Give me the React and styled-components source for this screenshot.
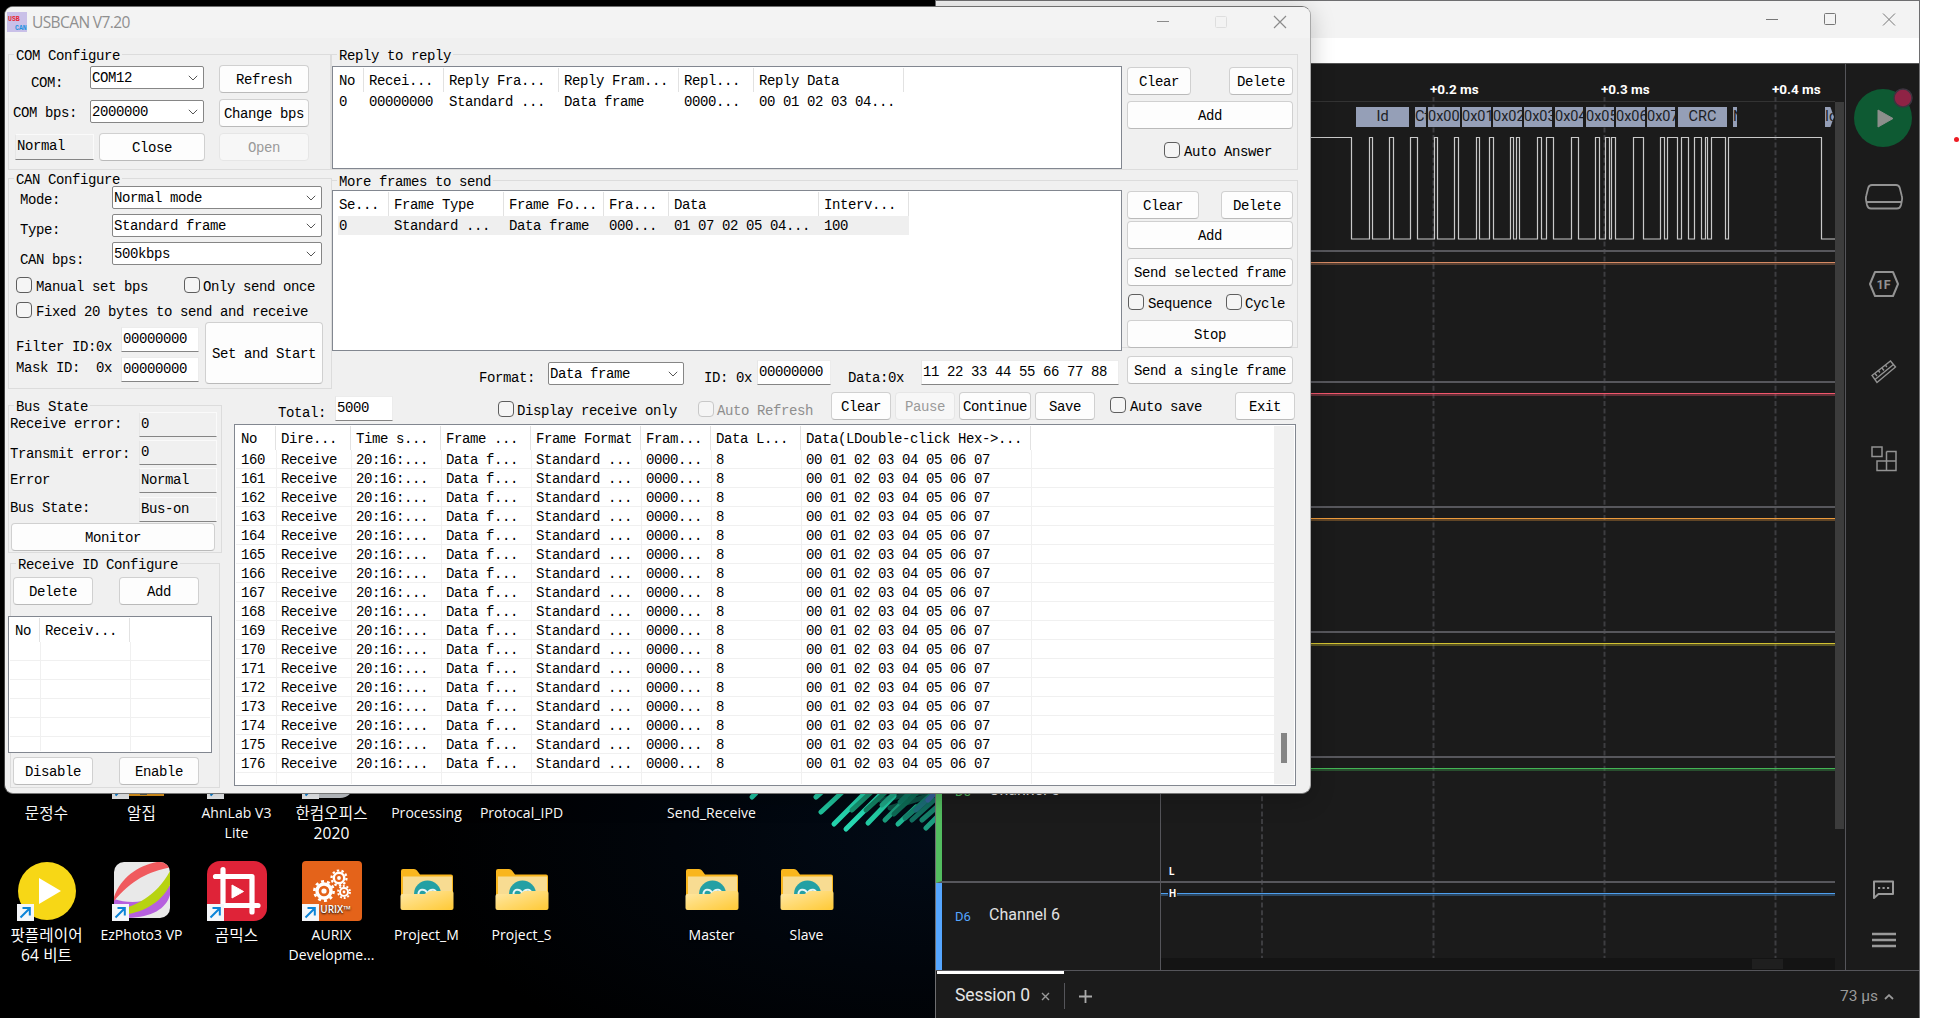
import React from "react";
import styled, { createGlobalStyle, css } from "styled-components";

const Global = createGlobalStyle`
  * { box-sizing: border-box; }
  body { margin: 0; background: #000; overflow: hidden; }
`;

/* ---------- desktop ---------- */

const Desktop = styled.div`
  position: relative;
  width: 1960px;
  height: 1018px;
  overflow: hidden;
  background: radial-gradient(ellipse 520px 260px at 935px 840px, #020b17 0%, #01050b 50%, #000 100%);
`;

const Wallpaper = styled.svg`
  position: absolute;
  left: 740px;
  top: 780px;
`;

const BlankEdge = styled.div`
  position: absolute;
  left: 1920px;
  top: 0;
  width: 40px;
  height: 1018px;
  background: #fff;
  padding: 137px 1px 0 0;
  display: flex;
  justify-content: flex-end;
`;

const RedDot = styled.i`
  width: 5px;
  height: 5px;
  border-radius: 50%;
  background: #ee1c24;
`;

const Shortcuts = styled.div`
  position: absolute;
  left: -1px;
  top: 739px;
  display: grid;
  grid-template-columns: repeat(9, 95px);
  grid-auto-rows: 122px;
`;

const Shortcut = styled.div`
  display: flex;
  flex-direction: column;
  align-items: center;
  font: 14px/20px "Open Sans", "Noto Sans CJK KR", sans-serif;
  letter-spacing: 0.05px;
  color: #fff;
  text-align: center;
  white-space: pre;
  text-shadow: 0 1px 2px #000;
  & > svg { display: block; margin-bottom: 4px; }
`;

const Korean = styled.span`
  font-size: 15.6px;
  letter-spacing: 0.1px;
`;

function Badge() {
  return (
    <g>
      <rect x="0" y="43" width="17" height="17" fill="#f4f6f9" />
      <path d="M3.5 56.5L12 48M5.5 47h7.3v7.5" fill="none" stroke="#0b84d8" strokeWidth="2" />
    </g>
  );
}

function Glyph({ kind }) {
  const folder = (
    <g>
      <path d="M4 10q0-2 2-2h11q2 0 3 1.500l3 4h31q2 0 2 2v32H4z" fill="#f9b61d" />
      <rect x="6" y="15.500" width="49" height="22" fill="#f8dc92" />
      <path d="M17 33a13.500 13.500 0 0 1 27 0z" fill="#24a0a4" />
      <path d="M21.500 33c-.5-5 6.500-6 9-.5 2.500-5.500 9.500-4.500 9 .5" fill="none" stroke="#e6f6f6" strokeWidth="2" />
      <path d="M3.500 35q0-2 2-2h22l5-3h22q2 0 2 2v15q0 2-2 2h-49q-2 0-2-2z" fill="url(#fold)" />
    </g>
  );
  const art = {
    none: null,
    folder,
    zip: <g><rect x="17" y="30" width="35" height="27" fill="#e69a1c" /><rect x="28" y="50" width="7" height="6" fill="#5b5b4b" /><Badge /></g>,
    plain: <Badge />,
    office: <g><rect x="4" y="10" width="48" height="49" rx="14" fill="#c9cdd2" /><Badge /></g>,
    pot: (
      <g>
        <circle cx="30" cy="30" r="29" fill="#f7d716" />
        <path d="M22 17l22 13-22 13z" fill="#fff" />
        <Badge />
      </g>
    ),
    photo: (
      <g>
        <clipPath id="ph"><rect x="2" y="1" width="56" height="56" rx="10" /></clipPath>
        <g clipPath="url(#ph)">
          <rect width="60" height="60" fill="#e9e9e9" />
          <path d="M2 38C20 44 42 42 58 24v10C54 48 40 56 16 57L2 48z" fill="#b660de" />
          <path d="M2 36C10 14 30 2 52 0l8 6C38 10 20 18 2 40z" fill="#f05a5e" />
          <path d="M2 50c20-4 42-14 56-40v14C48 44 28 52 10 54z" fill="#b7d311" />
        </g>
        <Badge />
      </g>
    ),
    gom: (
      <g>
        <rect width="60" height="60" rx="13" fill="#df2338" />
        <path d="M16 8.500v36h35M8.500 15.500H45V51" fill="none" stroke="#fff" strokeWidth="5.200" strokeLinecap="round" strokeLinejoin="round" />
        <path d="M25 24l11.500 6.500L25 37z" fill="#fff" stroke="#fff" strokeLinejoin="round" />
        <Badge />
      </g>
    ),
    aurix: (
      <g>
        <rect width="60" height="60" rx="4" fill="#e4631a" />
        <g fill="none" stroke="#fff">
          <circle cx="22" cy="30" r="7" strokeWidth="3.400" />
          <circle cx="22" cy="30" r="9.600" strokeWidth="2.600" strokeDasharray="3 3" />
          <circle cx="37" cy="17" r="5.200" strokeWidth="2.400" />
          <circle cx="37" cy="17" r="7.500" strokeWidth="2.200" strokeDasharray="2.400 2.300" />
          <circle cx="42" cy="31" r="4" strokeWidth="2" />
          <circle cx="42" cy="31" r="5.900" strokeWidth="2" strokeDasharray="1.900 1.800" />
        </g>
        <circle cx="22" cy="30" r="2.600" fill="#fff" />
        <circle cx="37" cy="17" r="1.900" fill="#fff" />
        <circle cx="42" cy="31" r="1.400" fill="#fff" />
        <text x="49" y="52" textAnchor="end" fontFamily="Open Sans" fontWeight="600" fontSize="10" fill="#fff" letterSpacing="0">URIX™</text>
        <Badge />
      </g>
    ),
  };
  return (
    <svg width="60" height="60" viewBox="0 0 60 60">
      <defs>
        <linearGradient id="fold" x1="0" y1="0" x2="1" y2="1">
          <stop offset="0" stopColor="#ffe9a8" />
          <stop offset="1" stopColor="#ffc934" />
        </linearGradient>
      </defs>
      {art[kind]}
    </svg>
  );
}

const desktopItems = [
  ["none", "문정수", true], ["zip", "알집", true], ["plain", "AhnLab V3\nLite"], ["office", "한컴오피스\n2020", true],
  ["none", "Processing"], ["none", "Protocal_IPD"], null, ["none", "Send_Receive"], null,
  ["pot", "팟플레이어\n64 비트", true], ["photo", "EzPhoto3 VP"], ["gom", "곰믹스", true], ["aurix", "AURIX\nDevelopme..."],
  ["folder", "Project_M"], ["folder", "Project_S"], null, ["folder", "Master"], ["folder", "Slave"],
];

const rays = [
  [12, 17, 16, 13, "#1fc9a6"], [140, 20, 196, 10, "#0b4a40"], [150, 28, 194, 14, "#0c5044"],
  [76, 17, 92, 3, "#22c7a3"], [81, 32, 112, 3, "#1fc29b"], [94, 44, 128, 10, "#24d3ad"],
  [106, 49, 142, 13, "#27d8b2"], [128, 43, 154, 16, "#22c9a2"], [112, 30, 140, 4, "#15916f"], [126, 30, 150, 8, "#128263"],
  [145, 40, 166, 19, "#1a9b7b"], [158, 44, 176, 27, "#1fb592"], [154, 34, 184, 6, "#0d6b55"], [165, 38, 190, 16, "#137e69"],
  [172, 40, 194, 20, "#116d5f"], [186, 48, 200, 34, "#1c9c80"], [176, 30, 196, 12, "#1c6d78"], [188, 20, 200, 8, "#35619a"],
  [160, 22, 178, 5, "#0f7560"], [142, 25, 160, 8, "#1fa584"], [182, 40, 198, 26, "#16806b"],
];

/* ---------- USBCAN dialog ---------- */

const mono = css`
  font-family: "Liberation Mono", "DejaVu Sans Mono", monospace;
  font-size: 14px;
  letter-spacing: -0.4px;
  line-height: 16px;
  white-space: pre;
`;

const Dialog = styled.section`
  position: absolute;
  left: 4px;
  top: 6px;
  width: 1307px;
  height: 788px;
  border: 1px solid #8b8b8b;
  border-color: #6f6f6f #a8a8a8 #777 #444;
  border-radius: 9px;
  background: #f0f0f0;
  overflow: hidden;
  box-shadow: 0 5px 24px rgba(0, 0, 0, 0.22);
  color: #000;
  ${mono}
`;

const DialogTitle = styled.header`
  display: flex;
  align-items: center;
  height: 31px;
  padding: 0 23px 2px 2px;
  background: #f3f3f3;
  color: #8f8f8f;
  font: 15.500px/20px "Open Sans", sans-serif;
  letter-spacing: -0.6px;
`;

const AppIcon = styled.svg`
  margin-right: 5px;
`;

const Controls = styled.svg`
  margin-left: auto;
`;

const Split = styled.div`
  display: flex;
  align-items: flex-start;
  height: ${(p) => (p.$h ? `${p.$h}px` : "auto")};
`;

const Column = styled.div`
  display: flex;
  flex-direction: column;
  flex: none;
  width: ${(p) => (p.$w ? `${p.$w}px` : "auto")};
  padding-left: ${(p) => p.$pad || 0}px;
`;

const Row = styled.div`
  display: flex;
  align-items: flex-start;
  height: ${(p) => (p.$h ? `${p.$h}px` : "auto")};
  margin-top: ${(p) => p.$mt || 0}px;
  padding-left: ${(p) => p.$pad || 0}px;
`;

const Group = styled.fieldset`
  flex: none;
  min-width: 0;
  width: ${(p) => p.$w}px;
  height: ${(p) => p.$h}px;
  margin: ${(p) => p.$mt || 0}px 0 0 ${(p) => p.$ml || 0}px;
  padding: 0;
  border: 1px solid #dcdcdc;
`;

const Legend = styled.legend`
  height: 17px;
  margin-left: 5px;
  padding: 0 2px;
  line-height: 20px;
`;

const Label = styled.span`
  flex: none;
  width: ${(p) => (p.$w ? `${p.$w}px` : "auto")};
  margin: ${(p) => p.$mt || 0}px 0 0 ${(p) => p.$ml || 0}px;
`;

const Button = styled.button`
  ${mono}
  flex: none;
  width: ${(p) => p.$w}px;
  height: ${(p) => p.$h || 28}px;
  margin: ${(p) => p.$mt || 0}px 0 0 ${(p) => p.$ml || 0}px;
  padding: 2px 0 0;
  border: 1px solid #d0d0d0;
  border-bottom-color: #bababa;
  border-radius: 4px;
  background: #fdfdfd;
  color: #000;
  &:disabled { color: #9a9a9a; background: #f7f7f7; border-color: #e6e6e6; }
`;

const Edit = styled.div`
  flex: none;
  width: ${(p) => p.$w}px;
  height: ${(p) => p.$h || 25}px;
  margin: ${(p) => p.$mt || 0}px 0 0 ${(p) => p.$ml || 0}px;
  padding: 3px 0 0 1px;
  border: 1px solid ${(p) => (p.$flat ? "#fafafa" : "#ececec")};
  border-left-color: #e6e6e6;
  border-bottom-color: #858585;
  background: ${(p) => (p.$flat ? "#f0f0f0" : "#fff")};
`;

const ComboBox = styled.div`
  display: flex;
  flex: none;
  justify-content: space-between;
  width: ${(p) => p.$w}px;
  height: 23px;
  margin: ${(p) => p.$mt || 0}px 0 0 ${(p) => p.$ml || 0}px;
  padding: 3px 5px 0 1px;
  border: 1px solid #868686;
  border-radius: 2px;
  background: #fff;
`;

function Combo({ children, ...rest }) {
  return (
    <ComboBox {...rest}>
      {children}
      <svg width="10" height="16" viewBox="0 0 10 16"><path d="M.8 5.800L5 10l4.200-4.200" fill="none" stroke="#555" /></svg>
    </ComboBox>
  );
}

const CheckLabel = styled.label`
  display: flex;
  flex: none;
  align-items: flex-start;
  margin: ${(p) => p.$mt || 0}px 0 0 ${(p) => p.$ml || 0}px;
  height: 16px;
  color: ${(p) => (p.$off ? "#8e8e8e" : "#000")};
  & > i {
    width: 16px;
    height: 16px;
    margin-right: ${(p) => p.$gap || 4}px;
    border: 1px solid ${(p) => (p.$off ? "#c8c8c8" : "#5e5e5e")};
    border-radius: 4px;
    background: #f5f5f5;
  }
  & > span { margin-top: 2px; }
`;

function Check({ children, ...rest }) {
  return <CheckLabel {...rest}><i /><span>{children}</span></CheckLabel>;
}

const List = styled.div`
  flex: none;
  display: flex;
  width: ${(p) => p.$w}px;
  height: ${(p) => p.$h}px;
  margin: ${(p) => p.$mt || 0}px 0 0 ${(p) => p.$ml || 0}px;
  padding: 1px;
  border: 1px solid #828790;
  background: #fff;
`;

const ListBody = styled.div`
  flex: 1;
  min-width: 0;
  overflow: hidden;
`;

const HeadLine = styled.div`
  display: grid;
  grid-template-columns: ${(p) => p.$cols};
  height: 24px;
  & > span {
    padding: 5px 0 0 5px;
    border-right: 1px solid #e2e2e2;
  }
  & > span:empty { border-right: 0; }
`;

const Line = styled.div`
  display: grid;
  grid-template-columns: ${(p) => p.$cols};
  height: 19px;
  border-bottom: ${(p) => (p.$grid ? "1px solid #f0f0f0" : "0")};
  & > span {
    padding: 3px 0 0 5px;
    line-height: 15px;
    box-shadow: ${(p) => (p.$grid ? "inset 1px 0 #f0f0f0" : "none")};
  }
  & > span:first-child { box-shadow: none; }
  ${(p) => p.$selected && css`
    width: fit-content;
    background: linear-gradient(90deg, #fff 4px, #efefef 4px);
  `}
`;

const ScrollTrack = styled.div`
  width: 20px;
  padding: 307px 0 0 7px;
  background: #f0f0f0;
  &::before { content: ""; display: block; width: 6px; height: 30px; background: #858585; }
`;

function ListView({ cols, head, rows, grid, selected, scroll, ...box }) {
  const tracks = cols.map((c) => `${c}px`).join(" ");
  return (
    <List {...box}>
      <ListBody>
        <HeadLine $cols={tracks}>{head.map((t, i) => <span key={i}>{t}</span>)}</HeadLine>
        {rows.map((r, n) => (
          <Line key={n} $cols={tracks} $grid={grid} $selected={selected === n}>
            {r.map((t, i) => <span key={i}>{t}</span>)}
          </Line>
        ))}
      </ListBody>
      {scroll && <ScrollTrack />}
    </List>
  );
}

const received = Array.from({ length: 17 }, (_, i) => [
  160 + i, "Receive", "20:16:...", "Data f...", "Standard ...", "0000...", "8", "00 01 02 03 04 05 06 07", "",
]);
received.push(Array(9).fill(""));

function UsbCan() {
  return (
    <Dialog>
      <DialogTitle>
        <AppIcon width="20" height="20" viewBox="0 0 20 20">
          <rect width="20" height="20" fill="#c9c0e8" />
          <text x="1" y="8.500" fontFamily="Liberation Mono" fontWeight="700" fontSize="6.500" letterSpacing="0" fill="#e8232f">USB</text>
          <text x="8" y="17.500" fontFamily="Liberation Mono" fontWeight="700" fontSize="6.500" letterSpacing="0" fill="#1d93e0">CAN</text>
        </AppIcon>
        USBCAN V7.20
        <Controls width="132" height="14" viewBox="0 0 132 14">
          <path d="M2 6.500h12" stroke="#8b8b8b" />
          <rect x="60.500" y="1.500" width="11" height="11" rx="1" fill="none" stroke="#dedede" />
          <path d="M119 1l12 12M131 1l-12 12" stroke="#8b8b8b" strokeWidth="1.200" />
        </Controls>
      </DialogTitle>

      <Split $h={350}>
        <Column $w={326} $pad={3}>
          <Group $w={323} $h={124} $mt={8}>
            <Legend>COM Configure</Legend>
            <Row $h={28} $mt={2}>
              <Label $ml={22} $mt={10} $w={59}>COM:</Label>
              <Combo $w={114} $mt={1}>COM12</Combo>
              <Button $w={90} $ml={15}>Refresh</Button>
            </Row>
            <Row $h={28} $mt={6}>
              <Label $ml={4} $mt={6} $w={77}>COM bps:</Label>
              <Combo $w={114} $mt={1}>2000000</Combo>
              <Button $w={90} $ml={15}>Change bps</Button>
            </Row>
            <Row $h={28} $mt={6}>
              <Edit $flat $w={79} $ml={6} $mt={1} $h={26}>Normal</Edit>
              <Button $w={106} $ml={5}>Close</Button>
              <Button $w={90} $ml={14} disabled>Open</Button>
            </Row>
          </Group>
          <Group $w={324} $h={219}>
            <Legend>CAN Configure</Legend>
            <Row $h={90}>
              <Column $w={103} $pad={11}>
                <Label $mt={5}>Mode:</Label>
                <Label $mt={14}>Type:</Label>
                <Label $mt={14}>CAN bps:</Label>
              </Column>
              <Column>
                <Combo $w={210} $mt={-1}>Normal mode</Combo>
                <Combo $w={210} $mt={5}>Standard frame</Combo>
                <Combo $w={210} $mt={5}>500kbps</Combo>
              </Column>
            </Row>
            <Row $h={25} $pad={7}>
              <Label $w={168}><Check>Manual set bps</Check></Label>
              <Check $gap={3}>Only send once</Check>
            </Row>
            <Row $h={20} $pad={7}>
              <Check>Fixed 20 bytes to send and receive</Check>
            </Row>
            <Row $pad={7}>
              <Column $w={105}>
                <Label $mt={17}>Filter ID:0x</Label>
                <Label $mt={5}>Mask ID:  0x</Label>
              </Column>
              <Column>
                <Edit $w={78} $mt={5}>00000000</Edit>
                <Edit $w={78} $mt={5}>00000000</Edit>
              </Column>
              <Button $w={118} $h={62} $ml={6}>Set and Start</Button>
            </Row>
          </Group>
        </Column>

        <Column>
          <Group $w={967} $h={124} $mt={8}>
            <Legend>Reply to reply</Legend>
            <Row>
              <ListView
                $w={790} $h={103} $mt={3}
                cols={[30, 80, 115, 120, 75, 150]}
                head={["No", "Recei...", "Reply Fra...", "Reply Fram...", "Repl...", "Reply Data"]}
                rows={[["0", "00000000", "Standard ...", "Data frame", "0000...", "00 01 02 03 04..."]]}
              />
              <Column $pad={5}>
                <Row $mt={4}><Button $w={64}>Clear</Button><Button $w={64} $ml={38}>Delete</Button></Row>
                <Button $w={166} $mt={6}>Add</Button>
                <Check $ml={37} $mt={13}>Auto Answer</Check>
              </Column>
            </Row>
          </Group>
          <Group $w={967} $h={176} $mt={2}>
            <Legend>More frames to send</Legend>
            <Row>
              <ListView
                $w={790} $h={161} $mt={1}
                cols={[55, 115, 100, 65, 150, 90]}
                head={["Se...", "Frame Type", "Frame Fo...", "Fra...", "Data", "Interv..."]}
                rows={[["0", "Standard ...", "Data frame", "000...", "01 07 02 05 04...", "100"]]}
                selected={0}
              />
              <Column $pad={5}>
                <Row $mt={2}><Button $w={72}>Clear</Button><Button $w={72} $ml={22}>Delete</Button></Row>
                <Button $w={166} $mt={2}>Add</Button>
                <Button $w={166} $mt={9}>Send selected frame</Button>
                <Row $h={16} $mt={8} $pad={1}><Label $w={98}><Check>Sequence</Check></Label><Check $gap={3}>Cycle</Check></Row>
                <Button $w={166} $mt={10}>Stop</Button>
              </Column>
            </Row>
          </Group>
          <Row $h={40}>
            <Label $ml={148} $mt={22} $w={69}>Format:</Label>
            <Combo $w={136} $mt={14}>Data frame</Combo>
            <Label $ml={20} $mt={22} $w={53}>ID: 0x</Label>
            <Edit $w={74} $mt={12}>00000000</Edit>
            <Label $ml={17} $mt={22} $w={73}>Data:0x</Label>
            <Edit $w={198} $mt={12}>11 22 33 44 55 66 77 88</Edit>
            <Button $w={166} $ml={8} $mt={8}>Send a single frame</Button>
          </Row>
        </Column>
      </Split>

      <Split>
        <Column $w={229}>
          <Group $w={214} $h={156} $ml={3} $mt={9}>
            <Legend>Bus State</Legend>
            <Row>
              <Column $w={130} $pad={1}>
                <Label $mt={2}>Receive error:</Label>
                <Label $mt={14}>Transmit error:</Label>
                <Label $mt={10}>Error</Label>
                <Label $mt={12}>Bus State:</Label>
              </Column>
              <Column>
                <Edit $flat $w={78} $mt={-2}>0</Edit>
                <Edit $flat $w={78} $mt={3}>0</Edit>
                <Edit $flat $w={78} $mt={3}>Normal</Edit>
                <Edit $flat $w={78} $mt={4}>Bus-on</Edit>
              </Column>
            </Row>
            <Button $w={204} $ml={2} $mt={1}>Monitor</Button>
          </Group>
          <Group $w={210} $h={233} $ml={5} $mt={2}>
            <Legend>Receive ID Configure</Legend>
            <Row $mt={5} $pad={2}><Button $w={80}>Delete</Button><Button $w={80} $ml={26}>Add</Button></Row>
            <ListView
              $w={204} $h={137} $mt={11} $ml={-3}
              cols={[30, 90, 80]} grid
              head={["No", "Receiv...", ""]}
              rows={Array(6).fill(["", "", ""])}
            />
            <Row $mt={4} $pad={2}><Button $w={80}>Disable</Button><Button $w={80} $ml={26}>Enable</Button></Row>
          </Group>
        </Column>
        <Column>
          <Row $h={36}>
            <Label $ml={44} $mt={17} $w={57}>Total:</Label>
            <Edit $w={58} $mt={8}>5000</Edit>
            <Check $ml={105} $mt={13} $gap={3}>Display receive only</Check>
            <Check $ml={21} $mt={13} $gap={3} $off>Auto Refresh</Check>
            <Button $w={60} $ml={18} $mt={4}>Clear</Button>
            <Button $w={60} $ml={4} $mt={4} disabled>Pause</Button>
            <Button $w={72} $ml={4} $mt={4}>Continue</Button>
            <Button $w={60} $ml={4} $mt={4}>Save</Button>
            <Check $ml={15} $mt={9}>Auto save</Check>
            <Button $w={60} $ml={33} $mt={4}>Exit</Button>
          </Row>
          <ListView
            $w={1062} $h={362}
            cols={[40, 75, 90, 90, 110, 70, 90, 230, 243]} grid scroll
            head={["No", "Dire...", "Time s...", "Frame ...", "Frame Format", "Fram...", "Data L...", "Data(LDouble-click Hex->...", ""]}
            rows={received}
          />
        </Column>
      </Split>
    </Dialog>
  );
}

/* ---------- logic analyzer window ---------- */

const Analyzer = styled.section`
  position: absolute;
  left: 935px;
  top: 0;
  width: 985px;
  height: 1018px;
  display: flex;
  flex-direction: column;
  border: 1px solid #6e6e70;
  border-bottom: 0;
  background: #1b1b1b;
  font-family: Roboto, sans-serif;
  color: #e4e4e4;
`;

const AnalyzerTitle = styled.header`
  display: flex;
  justify-content: flex-end;
  align-items: center;
  height: 37px;
  padding: 0 23px 2px 0;
  background: #f3f3f3;
`;

const MenuStrip = styled.div`
  height: 26px;
  background: #fff;
  border-bottom: 1px solid #555;
`;

const Workspace = styled.div`
  display: flex;
  height: 907px;
  border-bottom: 1px solid #55555a;
`;

const Channels = styled.div`
  width: 225px;
  border-right: 1px solid #55555a;
  padding-top: 37px;
`;

const Channel = styled.div`
  display: flex;
  height: ${(p) => p.$h}px;
  padding: 21px 0 0 13px;
  border-left: 6px solid ${(p) => p.$color};
  border-bottom: ${(p) => (p.$last ? 0 : 2)}px solid #57575c;
  font-size: 16px;
  line-height: 22px;
  color: #e2e2e2;
  & > b {
    width: 34px;
    font-weight: 400;
    font-size: 13px;
    line-height: 25px;
    color: ${(p) => p.$color};
  }
`;

const Plot = styled.div`
  position: relative;
  width: 674px;
  display: flex;
  flex-direction: column;
`;

const Overlay = styled.svg`
  position: absolute;
  left: 0;
  top: 0;
`;

const Ruler = styled.div`
  display: flex;
  flex: none;
  height: 38px;
  padding: 16px 0 0 98px;
  border-bottom: 1px solid #333;
  font-weight: 700;
  font-size: 13.500px;
  line-height: 18px;
  color: #fff;
  & > span { flex: none; width: 171px; white-space: nowrap; }
`;

const Frames = styled.div`
  display: flex;
  height: 20px;
  padding: 0 0 0 195px;
  margin-top: 5px;
`;

const Frame = styled.span`
  flex: none;
  width: ${(p) => p.$w}px;
  margin-right: ${(p) => p.$gap}px;
  overflow: hidden;
  background: #959fb7;
  color: #1b1d24;
  font-size: 14.500px;
  line-height: 20px;
  white-space: nowrap;
  text-align: ${(p) => (p.$center ? "center" : "left")};
  ${(p) => p.$arrow && css`clip-path: polygon(0 0, 60% 0, 100% 50%, 60% 100%, 0 100%);`}
`;

const Lane = styled.div`
  flex: none;
  height: ${(p) => p.$h}px;
  border-bottom: ${(p) => (p.$last ? 0 : 2)}px solid #57575c;
  padding-top: ${(p) => (p.$color ? 10 : 0)}px;
  position: relative;
  overflow: hidden;
  &::before {
    content: "";
    display: ${(p) => (p.$color ? "block" : "none")};
    height: 2px;
    border-top: 1px solid ${(p) => p.$color};
    background: ${(p) => p.$color}55;
  }
`;

const Level = styled.span`
  position: absolute;
  left: 7px;
  top: ${(p) => p.$top}px;
  padding: 0 1px;
  background: #1b1b1b;
  font-weight: 700;
  font-size: 10px;
  line-height: 11px;
  color: #fff;
`;

const HScroll = styled.div`
  height: 12px;
  margin-top: auto;
  padding: 1px 0 0 591px;
  background: #141414;
  &::before { content: ""; display: block; width: 31px; height: 10px; background: #1f1f1f; }
`;

const VScroll = styled.div`
  width: 10px;
  padding-top: 38px;
  &::before { content: ""; display: block; width: 9px; height: 727px; background: #3c3c3c; }
`;

const Sidebar = styled.nav`
  width: 74px;
  display: flex;
  flex-direction: column;
  align-items: center;
  border-left: 1px solid #55555a;
  padding: 23px 0 0 3px;
`;

const SideIcon = styled.svg`
  flex: none;
  margin-bottom: ${(p) => p.$after || 0}px;
`;

const Footer = styled.footer`
  display: flex;
  flex: 1;
  align-items: flex-start;
  padding-right: 25px;
  padding-left: 1px;
`;

const Tab = styled.div`
  width: 127px;
  height: 37px;
  padding: 9px 0 0 18px;
  border-top: 3px solid #fff;
  font-size: 17.500px;
  line-height: 24px;
  letter-spacing: -0.1px;
  display: flex;
  white-space: nowrap;
  & > svg { flex: none; margin: 9px 0 0 11px; }
`;

const NewTab = styled.div`
  height: 26px;
  margin-top: 12px;
  padding: 5px 0 0 14px;
  border-left: 1px solid #55555a;
`;

const Span = styled.div`
  display: flex;
  margin: 12px 0 0 auto;
  font-size: 15.500px;
  line-height: 26px;
  color: #9a9a9a;
  & > svg { margin: 11px 0 0 6px; }
`;

const channels = [
  ["D0", "Channel 0", 150, "#d0d0d0"],
  ["D1", "Channel 1", 131, "#d58a64"],
  ["D2", "Channel 2", 125, "#f0566c"],
  ["D3", "Channel 3", 125, "#eb9a3c"],
  ["D4", "Channel 4", 125, "#d2c233"],
  ["D5", "Channel 5", 125, "#43b455"],
  ["D6", "Channel 6", 75, "#4e9fee"],
];

const strips = { D5: "#53bd60", D6: "#55a6ff" };

const frames = [
  ["Id", 53, 6, true], ["Ct", 11, 2], ["0x00", 32, 2], ["0x01", 29, 2], ["0x02", 29, 2], ["0x03", 28, 3],
  ["0x04", 28, 3], ["0x05", 28, 2], ["0x06", 29, 2], ["0x07", 28, 3], ["CRC", 49, 6, true], ["N", 4, 88], ["Id", 9, 0, false, true],
];

/* high intervals of the first channel, in plot pixels */
const pulses = [
  [-2, 190.800], [208.900, 211.800], [228.700, 232], [249.700, 256], [273.700, 276.600], [293.900, 297.200], [315, 318],
  [328, 332.200], [349, 352], [355.800, 358.700], [376, 380.200], [385.600, 392.800], [410, 417.200], [434, 438.200],
  [444.600, 448], [450.900, 454.700], [472.300, 482], [499.300, 503], [506.400, 516.100], [520.300, 527], [533.400, 540.100],
  [544.300, 546.800], [550.200, 564.500], [567.500, 660.500],
];

const px = (v) => Math.floor(v) + 0.5;
const wave = pulses.map(([a, b], i) => `${i ? `V239H${px(a)}V137.5` : `M${a} 137.5`}H${px(b)}`).join("") + "V239H674";

function LogicAnalyzer() {
  return (
    <Analyzer>
      <AnalyzerTitle>
        <svg width="132" height="14" viewBox="0 0 132 14" fill="none" stroke="#777">
          <path d="M2 7.500h12M119 1.500l12 12M131 1.500l-12 12" />
          <rect x="60.500" y="1.500" width="11" height="11" rx="1" />
        </svg>
      </AnalyzerTitle>
      <MenuStrip />
      <Workspace>
        <Channels>
          {channels.map(([id, name, h, color], i) => (
            <Channel key={id} $h={i === 0 ? 151 : i === 6 ? 87 : h} $color={strips[id] || color} $last={i === 6}>
              <b>{id}</b>{name}
            </Channel>
          ))}
        </Channels>
        <Plot>
          <Overlay width="674" height="894" viewBox="0 64 674 894">
            {[101, 272.500, 443.500, 614.500].map((x) => (
              <path key={x} d={`M${x} 97V958`} stroke="#3d3d40" strokeWidth="2" strokeDasharray="5 2.600" />
            ))}
            <path d={wave} fill="none" stroke="#c9c9c9" strokeWidth="1.200" />
          </Overlay>
          <Ruler>
            <span /><span>+0.2 ms</span><span>+0.3 ms</span><span>+0.4 ms</span>
          </Ruler>
          {channels.map(([id, , h, color], i) => (
            i === 0 ? (
              <Lane key={id} $h={h}>
                <Frames>
                  {frames.map(([t, w, gap, center, arrow], n) => (
                    <Frame key={n} $w={w} $gap={gap} $center={center} $arrow={arrow}>{t}</Frame>
                  ))}
                </Frames>
              </Lane>
            ) : (
              <Lane key={id} $h={h} $color={color} $last={i === 6}>
                {i === 5 && <Level $top={108}>L</Level>}
                {i === 6 && <Level $top={5}>H</Level>}
              </Lane>
            )
          ))}
          <HScroll />
        </Plot>
        <VScroll />
        <Sidebar>
          <SideIcon width="66" height="66" viewBox="0 0 66 66" $after={31}>
            <circle cx="32" cy="31" r="29" fill="#0e5a33" />
            <path d="M27 23l15 8.500L27 40z" fill="#8c8f8c" stroke="#8c8f8c" strokeLinejoin="round" />
            <circle cx="52" cy="11" r="9" fill="#8f2345" stroke="#3d3540" strokeWidth="1.500" />
          </SideIcon>
          <SideIcon width="38" height="26" viewBox="0 0 38 26" fill="none" stroke="#939393" strokeWidth="1.800" $after={60}>
            <path d="M7 1h24q3 0 3.800 3l2 8q.6 2 0 5l-.8 4q-.8 3.500-4 3.500H6q-3.200 0-4-3.500L1.200 17q-.6-3 0-5l2-8Q4 1 7 1z" />
            <path d="M2 18h34" />
          </SideIcon>
          <SideIcon width="32" height="28" viewBox="0 0 32 28" $after={61}>
            <path d="M7 2h18l5 12-5 12H7L2 14z" fill="none" stroke="#939393" strokeWidth="2" strokeLinejoin="round" />
            <text x="15.500" y="18.500" textAnchor="middle" fontFamily="Roboto" fontWeight="700" fontSize="12.500" fill="#939393">1F</text>
          </SideIcon>
          <SideIcon width="28" height="26" viewBox="0 0 28 26" fill="none" stroke="#939393" strokeWidth="1.400" $after={61}>
            <path d="M2 16.500L20.500 2l5 6L7 23.500zM5 20.500L23.500 5.500" />
            <path d="M5 14.500l2 2.500M8.500 11.700l1.400 1.800M12 9l2 2.500M15.500 6.200l1.400 1.800" />
          </SideIcon>
          <SideIcon width="26" height="26" viewBox="0 0 26 26" fill="none" stroke="#939393" strokeWidth="1.500" $after={407}>
            <rect x="1" y="1" width="10" height="9.500" />
            <path d="M15.500 5.500h9.500v19H6V15h19M15.500 5.500v19" />
          </SideIcon>
          <SideIcon width="24" height="22" viewBox="0 0 24 22" $after={30}>
            <path d="M2 19V2.500h19v12.500H6.500z" fill="none" stroke="#9a9a9a" strokeWidth="2" strokeLinejoin="round" />
            <path d="M6 9h2.200M10.500 9h2.200M15 9h2.200" stroke="#9a9a9a" strokeWidth="2" />
          </SideIcon>
          <SideIcon width="26" height="18" viewBox="0 0 26 18">
            <path d="M1 3h24M1 9h24M1 15h24" stroke="#9a9a9a" strokeWidth="2.400" />
          </SideIcon>
        </Sidebar>
      </Workspace>
      <Footer>
        <Tab>
          Session 0
          <svg width="9" height="9" viewBox="0 0 9 9"><path d="M1 1l7 7M8 1L1 8" stroke="#999" strokeWidth="1.400" /></svg>
        </Tab>
        <NewTab>
          <svg width="13" height="13" viewBox="0 0 13 13"><path d="M6.500 0v13M0 6.500h13" stroke="#aaa" strokeWidth="1.800" /></svg>
        </NewTab>
        <Span>
          73 µs
          <svg width="10" height="6" viewBox="0 0 10 6"><path d="M1 5l4-3.800L9 5" fill="none" stroke="#9a9a9a" strokeWidth="1.800" /></svg>
        </Span>
      </Footer>
    </Analyzer>
  );
}

export default function App() {
  return (
    <Desktop>
      <Global />
      <Wallpaper width="195" height="70" viewBox="0 0 195 70">
        {rays.map(([x1, y1, x2, y2, c], i) => (
          <path key={i} d={`M${x1} ${y1}L${x2} ${y2}`} stroke={c} strokeWidth="5" strokeLinecap="round" />
        ))}
      </Wallpaper>
      <Shortcuts>
        {desktopItems.map((d, i) => (
          <Shortcut key={i}>
            {d && <Glyph kind={d[0]} />}
            {d && (d[2] ? <Korean>{d[1]}</Korean> : d[1])}
          </Shortcut>
        ))}
      </Shortcuts>
      <LogicAnalyzer />
      <BlankEdge><RedDot /></BlankEdge>
      <UsbCan />
    </Desktop>
  );
}
